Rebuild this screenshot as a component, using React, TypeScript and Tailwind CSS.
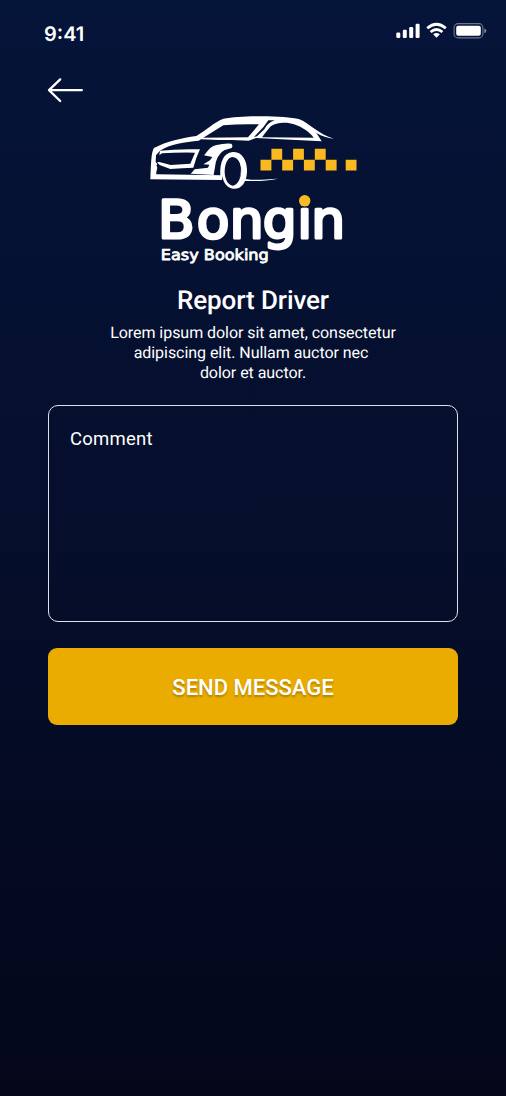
function StatusIcons() {
  return (
    <svg className="h-5 w-[92px]" viewBox="395 21 92 20" fill="white">
      <rect x="396.3" y="32.6" width="4" height="5.4" rx="1.2" />
      <rect x="402.8" y="29.8" width="4" height="8.2" rx="1.2" />
      <rect x="409.2" y="27" width="4" height="11" rx="1.2" />
      <rect x="415.6" y="23.7" width="4" height="14.3" rx="1.2" />
      <g fill="none" stroke="white" strokeWidth="2.7">
        <path d="M427.2 28.3Q436.5 20.2 445.8 28.3" />
        <path d="M430.6 32Q436.5 27 442.4 32" />
      </g>
      <path d="M433.1 34.3Q436.5 31.7 439.9 34.3L436.5 37.8Z" />
      <rect x="454.1" y="23.6" width="28.8" height="14.3" rx="4" fill="none" stroke="white" strokeOpacity=".42" strokeWidth="1.1" />
      <rect x="456.2" y="25.7" width="24.6" height="10.1" rx="2" />
      <path d="M484.3 28.4Q486.4 29.2 486.4 30.8T484.3 33.2Z" fillOpacity=".5" />
    </svg>
  );
}

function Logo() {
  return (
    <svg className="h-[160px] w-[220px]" viewBox="140 109 220 160" role="img" aria-label="Bongin Easy Booking">
      <g transform="translate(140 105) scale(.33333)" fill="white">
        <path
          fillRule="evenodd"
          d="M60 137C90 116 135 112 176 107L183 103C230 106 285 106 326 107L348 99L545 109C530 84 510 55 478 43C435 31 310 31 250 41C222 52 198 76 169 93C126 99 80 109 42 129C33 142 33 180 31 223L246 225L247 211L49 208C47 198 56 188 49 182L52 177L47 171L48 151ZM190 98L250 61Q300 56 357 58L324 97ZM385 46L404 46Q382 54 373 73L351 94L342 96L371 65ZM366 97Q380 77 391 65C406 53 440 49 462 58C489 67 509 82 521 98Z"
        />
        <path d="M475 43C512 57 535 88 582 101C542 97 518 78 477 54Z" />
        <path
          fillRule="evenodd"
          d="M60 137Q114 131 180 133Q168 158 160 188Q128 189 91 192L59 180L51 172L58 171L92 180L151 176L165 143Q112 142 66 145L58 151Z"
        />
        <path d="M192 151C202 141 208 125 230 120Q254 114 274 116Q281 124 273 130C257 133 246 138 240 147Q228 162 226 180L221 210L152 206L164 193L204 188L208 179L190 178L210 166L217 156Z" />
        <path
          fillRule="evenodd"
          d="M241 212C239 173 250 143 278 141C305 138 323 166 321 202C319 236 301 255 278 251C258 247 250 229 246 212ZM277 156C249 158 244 235 278 242C309 239 316 159 277 156Z"
        />
        <path d="M285 154C304 166 307 195 298 220C309 193 306 172 292 157Z" />
        <path d="M318 222C345 227 374 223 415 221C379 228 344 229 309 227Z" />
      </g>
      <path
        fill="#f9ba20"
        d="M260.5 159.7h10.9v10.8h-10.9zM271.4 148.8h10.8v10.9h-10.8zM282.2 159.7h10.9v10.8h-10.9zM293.1 148.8h10.8v10.9h-10.8zM303.9 159.7h10.9v10.8h-10.9zM314.8 148.8h10.9v10.9h-10.9zM325.7 159.7h10.9v10.8h-10.9zM345.7 159.7h10.8v10.8h-10.8z"
      />
      <text
        transform="scale(1.02 1)"
        x="155 192.8 225.2 257.5 291.5 305.2"
        y="237.7"
        stroke="white"
        strokeWidth="3"
        strokeLinejoin="round"
        className="fill-white font-['DejaVu_Sans',sans-serif] text-[52.4px]"
      >
        Bongin
      </text>
      <circle cx="304.7" cy="200.8" r="5.7" fill="#f9ba20" />
      <text
        x="160.8"
        y="259.6"
        textLength="108"
        lengthAdjust="spacingAndGlyphs"
        stroke="white"
        strokeWidth=".8"
        strokeLinejoin="round"
        className="fill-white font-['DejaVu_Sans',sans-serif] text-[15px]"
      >
        Easy Booking
      </text>
    </svg>
  );
}

export default function App() {
  return (
    <main className="flex h-[1096px] w-full flex-col bg-linear-to-b from-[#051439] via-[#050e2b] to-[#04071a] font-['Roboto',sans-serif] text-white [text-rendering:geometricPrecision]">
      <header className="flex h-[66px] items-start justify-between pt-[21px] pr-[19px] pl-[44px]">
        <span className="pt-px font-['Inter',sans-serif] text-[20px] leading-6 font-semibold">9:41</span>
        <StatusIcons />
      </header>
      <button aria-label="Back" className="ml-[46px] h-12 w-10">
        <svg className="h-12 w-10" viewBox="46 66 40 48" fill="none" stroke="white" strokeWidth="2.3" strokeLinecap="round" strokeLinejoin="round">
          <path d="M81.8 90.2H49M60.2 79.4L49 90.2L60.2 101" />
        </svg>
      </button>
      <div className="-mt-[5px] ml-[140px] h-[160px]">
        <Logo />
      </div>
      <section className="mt-4 flex flex-col items-center text-center">
        <h1 className="text-[26px] leading-8 font-medium tracking-[-0.1px]">Report Driver</h1>
        <p className="mt-[6px] text-[16px] leading-[19.8px] tracking-[-0.05px]">
          Lorem ipsum dolor sit amet, consectetur
          <br />
          <span className="relative right-[2px]">adipiscing elit. Nullam auctor nec</span>
          <br />
          dolor et auctor.
        </p>
      </section>
      <form className="mx-12 mt-[23px] flex flex-col gap-[26px]" onSubmit={(e) => e.preventDefault()}>
        <textarea
          aria-label="Comment"
          placeholder="Comment"
          className="h-[217px] w-full resize-none rounded-[10px] border border-[#dfe0eb] bg-transparent px-[21px] py-[21px] text-[18.5px] leading-6 tracking-[0.25px] text-white outline-none placeholder:text-white"
        />
        <button className="h-[77px] rounded-[9px] bg-[#eaac00] pt-[2px] text-[22px] font-medium [text-shadow:0_2px_2px_rgb(0_0_0/0.25)]">
          SEND MESSAGE
        </button>
      </form>
    </main>
  );
}
